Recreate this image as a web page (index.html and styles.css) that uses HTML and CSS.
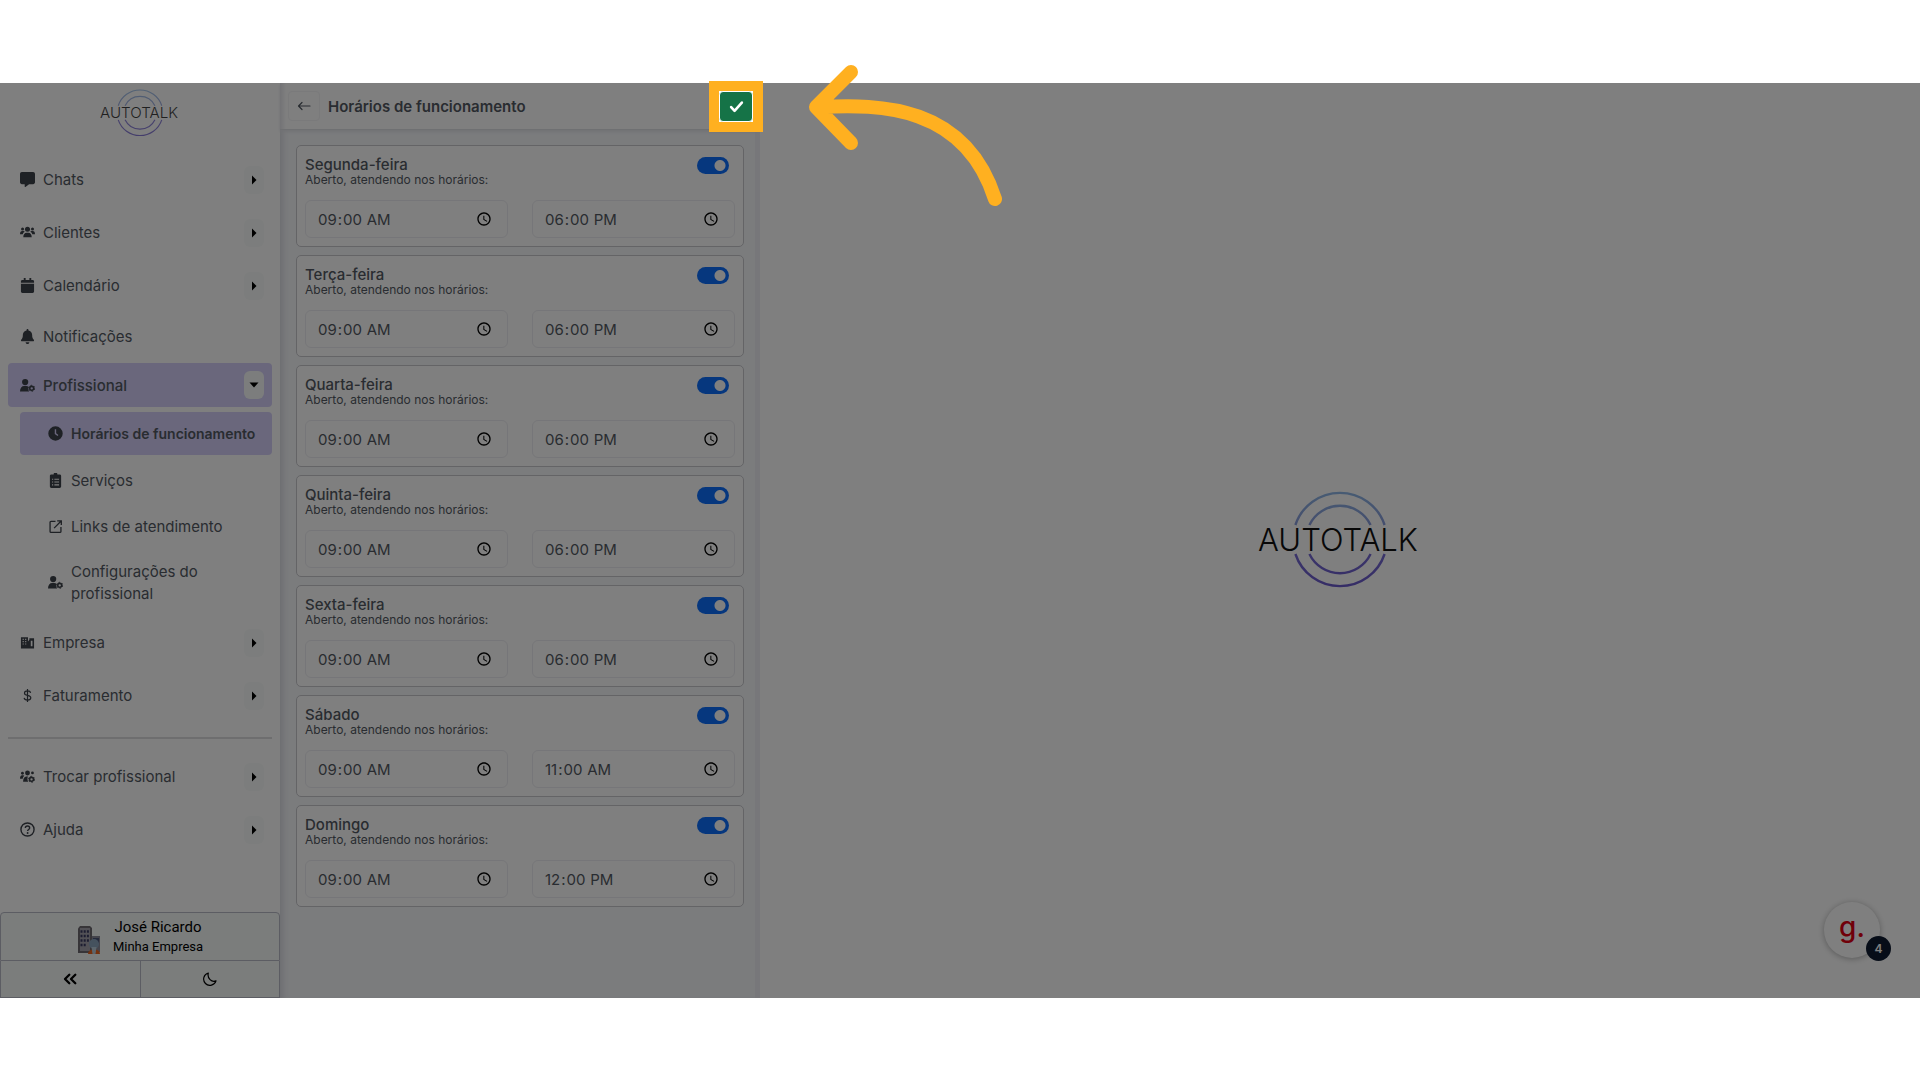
FILE: index.html
```html
<!DOCTYPE html>
<html lang="en-US">
<head>
<meta charset="utf-8">
<title>Autotalk - Horários de funcionamento</title>
<link rel="stylesheet" href="styles.css">
</head>
<body>
<svg class="sprite" aria-hidden="true">
  <defs>
    <linearGradient id="ring" gradientUnits="userSpaceOnUse" x1="0" y1="2" x2="0" y2="98">
      <stop offset="0" stop-color="#8fb6e6"/><stop offset=".4" stop-color="#8796d8"/>
      <stop offset=".6" stop-color="#776cd4"/><stop offset="1" stop-color="#6a59cc"/>
    </linearGradient>
    <symbol id="logo" viewBox="0 0 164 100">
      <g fill="none" stroke="url(#ring)" stroke-width="2.4">
        <path d="M37.4 34A47 47 0 0 1 126.600 34M51.400 34A34 34 0 0 1 112.600 34"/>
        <path d="M37.400 63A47 47 0 0 0 126.600 63M51.400 63A34 34 0 0 0 112.600 63"/>
      </g>
      <text x="80" y="60" text-anchor="middle" class="logo-text">AUTOTALK</text>
    </symbol>
    <symbol id="i-chat" viewBox="0 0 512 512"><path d="M64 0C28.700 0 0 28.700 0 64V352c0 35.300 28.700 64 64 64h96v80c0 6.100 3.400 11.600 8.800 14.300s11.900 2.100 16.800-1.500L309.300 416H448c35.300 0 64-28.700 64-64V64c0-35.300-28.700-64-64-64H64z"/></symbol>
    <symbol id="i-users" viewBox="0 0 16 16"><circle cx="8" cy="4.500" r="2.700"/><circle cx="2.700" cy="4.200" r="1.600"/><circle cx="13.300" cy="4.200" r="1.600"/><path d="M3.500 13c0-3 1.500-4.700 3.500-4.700h2c2 0 3.500 1.700 3.500 4.700zM0 9.800C0 7.700.900 6.500 2.300 6.500h1.500c.6 0 .9.300 1.200.7C3.800 7.900 3.100 8.800 2.900 9.800zM16 9.800c0-2.100-.9-3.300-2.300-3.300h-1.500c-.6 0-.9.300-1.200.7 1.200.7 1.900 1.600 2.100 2.600z"/></symbol>
    <symbol id="i-calendar" viewBox="0 0 16 16"><path d="M4 0h2v2h4V0h2v2h1.500c.8 0 1.500.700 1.500 1.500V5H1V3.500C1 2.700 1.700 2 2.500 2H4zM1 6h14v8.500c0 .8-.7 1.500-1.500 1.500h-11C1.700 16 1 15.300 1 14.500z"/></symbol>
    <symbol id="i-bell" viewBox="-32 0 512 512"><path d="M224 0c-17.700 0-32 14.300-32 32V51.200C119 66 64 130.600 64 208v18.800c0 47-17.300 92.400-48.500 127.600l-7.400 8.300c-8.400 9.400-10.400 22.900-5.300 34.400S19.400 416 32 416H416c12.600 0 24-7.400 29.200-18.900s3.100-25-5.300-34.400l-7.400-8.300C401.300 319.200 384 273.900 384 226.800V208c0-77.400-55-142-128-156.800V32c0-17.700-14.300-32-32-32zm45.300 493.300c12-12 18.700-28.300 18.700-45.300H160c0 17 6.700 33.300 18.700 45.300s28.300 18.700 45.300 18.700s33.300-6.700 45.300-18.700z"/></symbol>
    <symbol id="i-usergear" viewBox="0 0 16 16"><circle cx="5.500" cy="4.300" r="3.300"/><path d="M0 14.500c0-4 2-6 4.300-6h2.400c1 0 1.900.3 2.600 1-.6 1.200-.6 3.200.5 5z"/><circle cx="12.500" cy="11" r="2.100" fill="none" stroke="currentColor" stroke-width="1.700"/><circle cx="12.500" cy="11" r="3.200" fill="none" stroke="currentColor" stroke-width="1" stroke-dasharray="1.700 1.650"/></symbol>
    <symbol id="i-usersgear" viewBox="0 0 16 16"><circle cx="8" cy="4.300" r="2.600"/><circle cx="2.600" cy="4.500" r="1.500"/><circle cx="13.300" cy="4.200" r="1.500"/><path d="M3.300 13.500c0-3 1.300-5.500 3.400-5.500h1.800c-.9 1.700-.7 4 .3 5.500zM0 10.500C0 8 .800 6.700 2.200 6.700h1.300c.5 0 .9.200 1.100.6C3.500 8.300 3 9.300 2.900 10.500z"/><circle cx="12.300" cy="11" r="2.100" fill="none" stroke="currentColor" stroke-width="1.700"/><circle cx="12.300" cy="11" r="3.200" fill="none" stroke="currentColor" stroke-width="1" stroke-dasharray="1.700 1.650"/></symbol>
    <symbol id="i-clock" viewBox="0 0 16 16"><path fill-rule="evenodd" d="M8 .3a7.700 7.700 0 1 1 0 15.400A7.700 7.700 0 0 1 8 .3zM7.200 3.500v5l3 2.200.9-1.200-2.400-1.800V3.500z"/></symbol>
    <symbol id="i-clipboard" viewBox="0 0 16 16"><path fill-rule="evenodd" d="M6 1.500a2 2 0 0 1 4 0h2.500c.8 0 1.500.700 1.500 1.500v11.500c0 .8-.7 1.500-1.500 1.500h-9c-.8 0-1.500-.7-1.500-1.500V3c0-.8.7-1.500 1.500-1.500zM4.300 6v1.200h1.200V6zm2.500 0v1.200h5V6zM4.300 9v1.200h1.200V9zm2.500 0v1.200h5V9zm-2.500 3v1.200h1.200V12zm2.500 0v1.200h5V12z"/></symbol>
    <symbol id="i-link" viewBox="0 0 16 16"><path d="M8 2.500H3.200c-.6 0-1 .4-1 1v9.700c0 .6.400 1 1 1h9.600c.6 0 1-.4 1-1V8.500M9.800 2h4.400v4.400M14 2.200 6.500 9.700" fill="none" stroke="currentColor" stroke-width="1.400"/></symbol>
    <symbol id="i-building" viewBox="0 0 16 16"><path fill-rule="evenodd" d="M1 2.300h7.500V7L10 5V3.500h5V14.300H1zM2.800 4v1.200H4V4zm2.700 0v1.200h1.200V4zM2.800 6.500v1.200H4V6.500zm2.700 0v1.200h1.200V6.500zM2.800 9v1.200H4V9zm2.700 0v1.200h1.200V9zm6-3v6h1.800V6z"/></symbol>
    <symbol id="i-dollar" viewBox="0 0 16 16"><path d="M8 1v14M11.300 5.200C11 3.800 9.800 3.100 8 3.100S4.800 4 4.800 5.500C4.800 8.700 11.500 7.200 11.500 10.500c0 1.500-1.500 2.400-3.500 2.400s-3.300-.8-3.600-2.300" fill="none" stroke="currentColor" stroke-width="1.300"/></symbol>
    <symbol id="i-help" viewBox="0 0 16 16"><circle cx="8" cy="8" r="7" fill="none" stroke="currentColor" stroke-width="1.500"/><path d="M5.700 6.500C5.700 5 6.700 4.200 8 4.200s2.300.8 2.300 2.100c0 1.700-2.200 1.600-2.200 3.400" fill="none" stroke="currentColor" stroke-width="1.500"/><circle cx="8.100" cy="11.700" r="1"/></symbol>
    <symbol id="i-right" viewBox="0 0 12 12"><path d="M4 1.500 8.500 6 4 10.500z"/></symbol>
    <symbol id="i-down" viewBox="0 0 12 12"><path d="M1.500 3.500h9L6 8.500z"/></symbol>
    <symbol id="i-back" viewBox="0 0 14 14"><path d="M13 7H1.500M5 3.500 1.500 7 5 10.500" fill="none" stroke="currentColor" stroke-width="1.200" stroke-linecap="round" stroke-linejoin="round"/></symbol>
    <symbol id="i-check" viewBox="0 0 14 14"><path d="M2 7.500 5.200 11 12 3.300" fill="none" stroke="currentColor" stroke-width="2.400" stroke-linecap="round" stroke-linejoin="round"/></symbol>
    <symbol id="i-collapse" viewBox="0 0 14 14"><path d="M6.300 2.700 2 7l4.300 4.300M12.300 2.700 8 7l4.300 4.300" fill="none" stroke="currentColor" stroke-width="2.300" stroke-linecap="round" stroke-linejoin="round"/></symbol>
    <symbol id="i-moon" viewBox="0 0 14 14"><path d="M5.300 1A6.300 6.300 0 1 0 13 8.900C8.800 10.600 3.900 6.600 5.300 1z" fill="none" stroke="currentColor" stroke-width="1.200" stroke-linejoin="round"/></symbol>
    <symbol id="i-company" viewBox="0 0 24 30"><path d="M1 3.500 3 1h10l2 2v25H1z" fill="#6e6a70"/><path d="M3 3h10v23H3z" fill="#a5a3ad"/><path d="M3.500 6.500h9M3.500 11h9M3.500 15.500h9M3.500 20h6" stroke="#3b3d63" stroke-width="2.500" stroke-dasharray="2 1.200"/><path d="M15 11h8v16h-8z" fill="#8b8a99"/><path d="M16 13h6v5h-6z" fill="#4b5478"/><circle cx="17" cy="19" r="5" fill="#8ba4bd"/><path d="M11 29c0-3 2-4.500 6-4.500s6 1.500 6 4.500z" fill="#e8641f"/><path d="M14.500 22h5l-1 7h-3z" fill="#b9cbd8"/></symbol>
  </defs>
</svg>

<div class="app">
  <aside class="sidebar">
    <a class="brand" href="#" aria-label="Autotalk"><svg class="brand-logo"><use href="#logo"/></svg></a>
    <nav class="menu">
      <div class="item"><a href="#"><svg class="icon"><use href="#i-chat"/></svg>Chats</a><button class="expand" aria-label="Expandir Chats"><svg><use href="#i-right"/></svg></button></div>
      <div class="item"><a href="#"><svg class="icon"><use href="#i-users"/></svg>Clientes</a><button class="expand" aria-label="Expandir Clientes"><svg><use href="#i-right"/></svg></button></div>
      <div class="item"><a href="#"><svg class="icon"><use href="#i-calendar"/></svg>Calendário</a><button class="expand" aria-label="Expandir Calendário"><svg><use href="#i-right"/></svg></button></div>
      <div class="item item-plain"><a href="#"><svg class="icon"><use href="#i-bell"/></svg>Notificações</a></div>
      <div class="item item-active"><a href="#"><svg class="icon"><use href="#i-usergear"/></svg>Profissional</a><button class="expand" aria-label="Recolher Profissional"><svg><use href="#i-down"/></svg></button></div>
      <div class="submenu">
        <a class="sub sub-active" href="#"><svg class="icon"><use href="#i-clock"/></svg>Horários de funcionamento</a>
        <a class="sub" href="#"><svg class="icon"><use href="#i-clipboard"/></svg>Serviços</a>
        <a class="sub" href="#"><svg class="icon"><use href="#i-link"/></svg>Links de atendimento</a>
        <a class="sub sub-tall" href="#"><svg class="icon"><use href="#i-usergear"/></svg><span>Configurações do<br>profissional</span></a>
      </div>
      <div class="item"><a href="#"><svg class="icon"><use href="#i-building"/></svg>Empresa</a><button class="expand" aria-label="Expandir Empresa"><svg><use href="#i-right"/></svg></button></div>
      <div class="item"><a href="#"><svg class="icon"><use href="#i-dollar"/></svg>Faturamento</a><button class="expand" aria-label="Expandir Faturamento"><svg><use href="#i-right"/></svg></button></div>
      <hr>
      <div class="item"><a href="#"><svg class="icon"><use href="#i-usersgear"/></svg>Trocar profissional</a><button class="expand" aria-label="Expandir Trocar profissional"><svg><use href="#i-right"/></svg></button></div>
      <div class="item"><a href="#"><svg class="icon"><use href="#i-help"/></svg>Ajuda</a><button class="expand" aria-label="Expandir Ajuda"><svg><use href="#i-right"/></svg></button></div>
    </nav>
    <footer class="account">
      <button class="profile"><svg class="company"><use href="#i-company"/></svg><span><span class="name">José Ricardo</span><span class="company-name">Minha Empresa</span></span></button>
      <div class="tools">
        <button aria-label="Recolher menu"><svg><use href="#i-collapse"/></svg></button>
        <button aria-label="Modo escuro"><svg><use href="#i-moon"/></svg></button>
      </div>
    </footer>
  </aside>

  <section class="panel">
    <header class="panel-head">
      <button class="back" aria-label="Voltar"><svg><use href="#i-back"/></svg></button>
      <h1>Horários de funcionamento</h1>
      <div class="spotlight"><button class="save" aria-label="Salvar"><svg><use href="#i-check"/></svg></button></div>
    </header>
    <div class="days">
      <article class="day">
        <div class="day-head"><div><h2>Segunda-feira</h2><p>Aberto, atendendo nos horários:</p></div><input class="switch" type="checkbox" role="switch" aria-label="Segunda-feira aberto" checked></div>
        <div class="times"><input type="time" value="09:00" aria-label="Abertura"><input type="time" value="18:00" aria-label="Fechamento"></div>
      </article>
      <article class="day">
        <div class="day-head"><div><h2>Terça-feira</h2><p>Aberto, atendendo nos horários:</p></div><input class="switch" type="checkbox" role="switch" aria-label="Terça-feira aberto" checked></div>
        <div class="times"><input type="time" value="09:00" aria-label="Abertura"><input type="time" value="18:00" aria-label="Fechamento"></div>
      </article>
      <article class="day">
        <div class="day-head"><div><h2>Quarta-feira</h2><p>Aberto, atendendo nos horários:</p></div><input class="switch" type="checkbox" role="switch" aria-label="Quarta-feira aberto" checked></div>
        <div class="times"><input type="time" value="09:00" aria-label="Abertura"><input type="time" value="18:00" aria-label="Fechamento"></div>
      </article>
      <article class="day">
        <div class="day-head"><div><h2>Quinta-feira</h2><p>Aberto, atendendo nos horários:</p></div><input class="switch" type="checkbox" role="switch" aria-label="Quinta-feira aberto" checked></div>
        <div class="times"><input type="time" value="09:00" aria-label="Abertura"><input type="time" value="18:00" aria-label="Fechamento"></div>
      </article>
      <article class="day">
        <div class="day-head"><div><h2>Sexta-feira</h2><p>Aberto, atendendo nos horários:</p></div><input class="switch" type="checkbox" role="switch" aria-label="Sexta-feira aberto" checked></div>
        <div class="times"><input type="time" value="09:00" aria-label="Abertura"><input type="time" value="18:00" aria-label="Fechamento"></div>
      </article>
      <article class="day">
        <div class="day-head"><div><h2>Sábado</h2><p>Aberto, atendendo nos horários:</p></div><input class="switch" type="checkbox" role="switch" aria-label="Sábado aberto" checked></div>
        <div class="times"><input type="time" value="09:00" aria-label="Abertura"><input type="time" value="11:00" aria-label="Fechamento"></div>
      </article>
      <article class="day">
        <div class="day-head"><div><h2>Domingo</h2><p>Aberto, atendendo nos horários:</p></div><input class="switch" type="checkbox" role="switch" aria-label="Domingo aberto" checked></div>
        <div class="times"><input type="time" value="09:00" aria-label="Abertura"><input type="time" value="12:00" aria-label="Fechamento"></div>
      </article>
    </div>
  </section>

  <main class="welcome"><svg class="welcome-logo" role="img" aria-label="Autotalk"><use href="#logo"/></svg></main>

  <button class="guide" aria-label="Guia">g.<span class="guide-count">4</span></button>
  <div class="dim"></div>
  <svg class="pointer" viewBox="0 0 200 150" aria-hidden="true"><path d="M43 14 8 49l35 36M12 49C72 46 157 47 187 141"/></svg>
</div>
</body>
</html>
```
FILE: styles.css
```css
* { box-sizing: border-box; }
body {
  margin: 0;
  padding: 83px 0 82px;
  background: #fff;
  color: #535962;
  font-family: Inter, "Liberation Sans", sans-serif;
  font-size: 15px;
}
button { font: inherit; color: inherit; padding: 0; border: 0; cursor: pointer; }
a { color: inherit; text-decoration: none; }
h1, h2, p { margin: 0; }
.sprite { position: absolute; width: 0; height: 0; }

.app {
  position: relative;
  display: flex;
  min-height: calc(100vh - 165px);
}
.dim {
  position: absolute;
  inset: 0;
  z-index: 1;
  background: rgba(0, 0, 0, .5);
  pointer-events: none;
}

/* Sidebar */
.sidebar {
  flex: 0 0 280px;
  display: flex;
  flex-direction: column;
  background: #fff;
}
.brand { height: 72px; padding-top: 6px; text-align: center; }
.brand-logo { width: 80px; height: 49px; }
.logo-text { font: 300 31px Inter, sans-serif; fill: #111; }
.brand-logo { opacity: .8; }
.menu { display: flex; flex-direction: column; gap: 5px; padding: 0 8px; }
.item {
  display: flex;
  align-items: center;
  height: 48px;
  padding: 0 8px 0 12px;
}
.item a { flex: 1; display: flex; align-items: center; gap: 8px; }
.item-plain { height: 44px; }
.item-active {
  height: 44px;
  border-radius: 4px;
  background: #d4cff8;
  font-weight: 500;
}
.icon { flex: none; width: 15px; height: 15px; fill: currentColor; color: #3d424a; }
.expand {
  display: grid;
  place-items: center;
  width: 20px;
  height: 28px;
  margin-top: 2px;
  border-radius: 6px;
  background: #f8fbfa;
  color: #000;
}
.item-active .expand { margin-top: 0; }
.expand svg { width: 12px; height: 12px; fill: currentColor; }
.submenu { display: flex; flex-direction: column; gap: 5px; padding-left: 12px; }
.sub {
  display: flex;
  align-items: center;
  gap: 8px;
  height: 41px;
  padding-left: 28px;
  line-height: 22px;
  white-space: nowrap;
}
.sub-active {
  height: 43px;
  border-radius: 4px;
  background: #d4cff8;
  font-size: 14px;
  font-weight: 600;
}
.sub-tall { height: 61px; }
.menu hr {
  width: 100%;
  height: 2px;
  margin: 13px 0 8px;
  border: 0;
  background: #dcdddf;
}
.account { margin-top: auto; color: #000; }
.profile {
  display: flex;
  align-items: center;
  justify-content: center;
  gap: 12px;
  width: 100%;
  height: 49px;
  border: 1px solid #b9bac6;
  border-radius: 4px 4px 0 0;
  background: #f6faf9;
}
.company { width: 24px; height: 30px; margin-top: 6px; }
.name, .company-name { display: block; font-family: Roboto, sans-serif; line-height: 20px; }
.name { font-size: 15px; }
.company-name { font-size: 13px; }
.tools { display: flex; }
.tools button {
  flex: 1;
  display: grid;
  place-items: center;
  height: 37px;
  border: 1px solid #b9bac6;
  border-top: 0;
  background: #f6faf9;
}
.tools button + button { border-left: 0; }
.tools svg { width: 14px; height: 14px; }

/* Opening hours */
.panel {
  flex: 0 0 480px;
  display: flex;
  flex-direction: column;
  border-right: 5px solid #eeeff4;
  background: #f6f8fb;
  box-shadow: inset 7px 0 6px -4px #d9dae2;
}
.panel-head {
  display: flex;
  align-items: center;
  gap: 8px;
  height: 47px;
  margin-right: -5px;
  padding: 0 7px 0 8px;
  border-bottom: 1px solid #dfe0e4;
  background: linear-gradient(90deg, #e6e6ec, #fff 6px);
  box-shadow: 0 2px 3px #e4e5ea;
}
.panel-head h1 { flex: 1; font-size: 15px; font-weight: 600; }
.back {
  display: grid;
  place-items: center;
  width: 32px;
  height: 30px;
  border: 1px solid #f4f4f6;
  border-radius: 4px;
  background: #fff;
}
.back svg { width: 14px; height: 14px; }
.spotlight {
  position: relative;
  z-index: 2;
  margin: -10px;
  border: 10px solid #ffb020;
  background: #fff;
}
.save {
  display: grid;
  place-items: center;
  width: 34px;
  height: 31px;
  border: 1px solid #fff;
  border-radius: 4px;
  background: #157347;
  color: #fff;
}
.save svg { width: 15px; height: 15px; }
.days { display: grid; gap: 8px; padding: 15px 11px 0 16px; }
.day {
  height: 102px;
  padding: 8px;
  border: 1px solid #c8c9cd;
  border-radius: 5px;
  background: #fff;
}
.day-head { display: flex; justify-content: space-between; }
.day h2 { font-size: 15px; font-weight: 500; line-height: 22px; }
.day p { margin-top: -4px; font-size: 12px; line-height: 16px; }
.switch {
  appearance: none;
  width: 32px;
  height: 17px;
  margin: 3px 6px 0 0;
  border-radius: 9px;
  background: radial-gradient(circle at 23px 50%, #fff 5px, transparent 6px), #0d6efd;
}
.times { display: grid; grid-template-columns: 1fr 1fr; gap: 24px; margin-top: 12px; }
.times input {
  min-width: 0;
  height: 38px;
  padding: 0 12px 0 11px;
  border: 1px solid #ededf2;
  border-radius: 6px;
  background: #fff;
  color: #535962;
  font: 15px Inter, sans-serif;
}

/* Empty state */
.welcome { flex: 1; display: grid; place-items: center; background: #fff; }
.welcome-logo { width: 164px; height: 100px; }

/* Floating help and tour pointer */
.guide {
  position: absolute;
  right: 40px;
  bottom: 40px;
  width: 56px;
  height: 56px;
  padding-bottom: 6px;
  border-radius: 50%;
  background: #fff;
  box-shadow: 0 1px 6px rgba(0, 0, 0, .3);
  color: #e00012;
  font-size: 28px;
  font-weight: 500;
}
.guide-count {
  position: absolute;
  right: -11px;
  bottom: -3px;
  width: 25px;
  height: 25px;
  border-radius: 50%;
  background: #0f1b30;
  color: #fff;
  font-size: 12px;
  font-weight: 600;
  line-height: 25px;
}
.pointer {
  position: absolute;
  left: 808px;
  top: -25px;
  z-index: 2;
  width: 200px;
  height: 150px;
  fill: none;
  stroke: #ffb020;
  stroke-width: 14;
  stroke-linecap: round;
  stroke-linejoin: round;
  pointer-events: none;
}
```
